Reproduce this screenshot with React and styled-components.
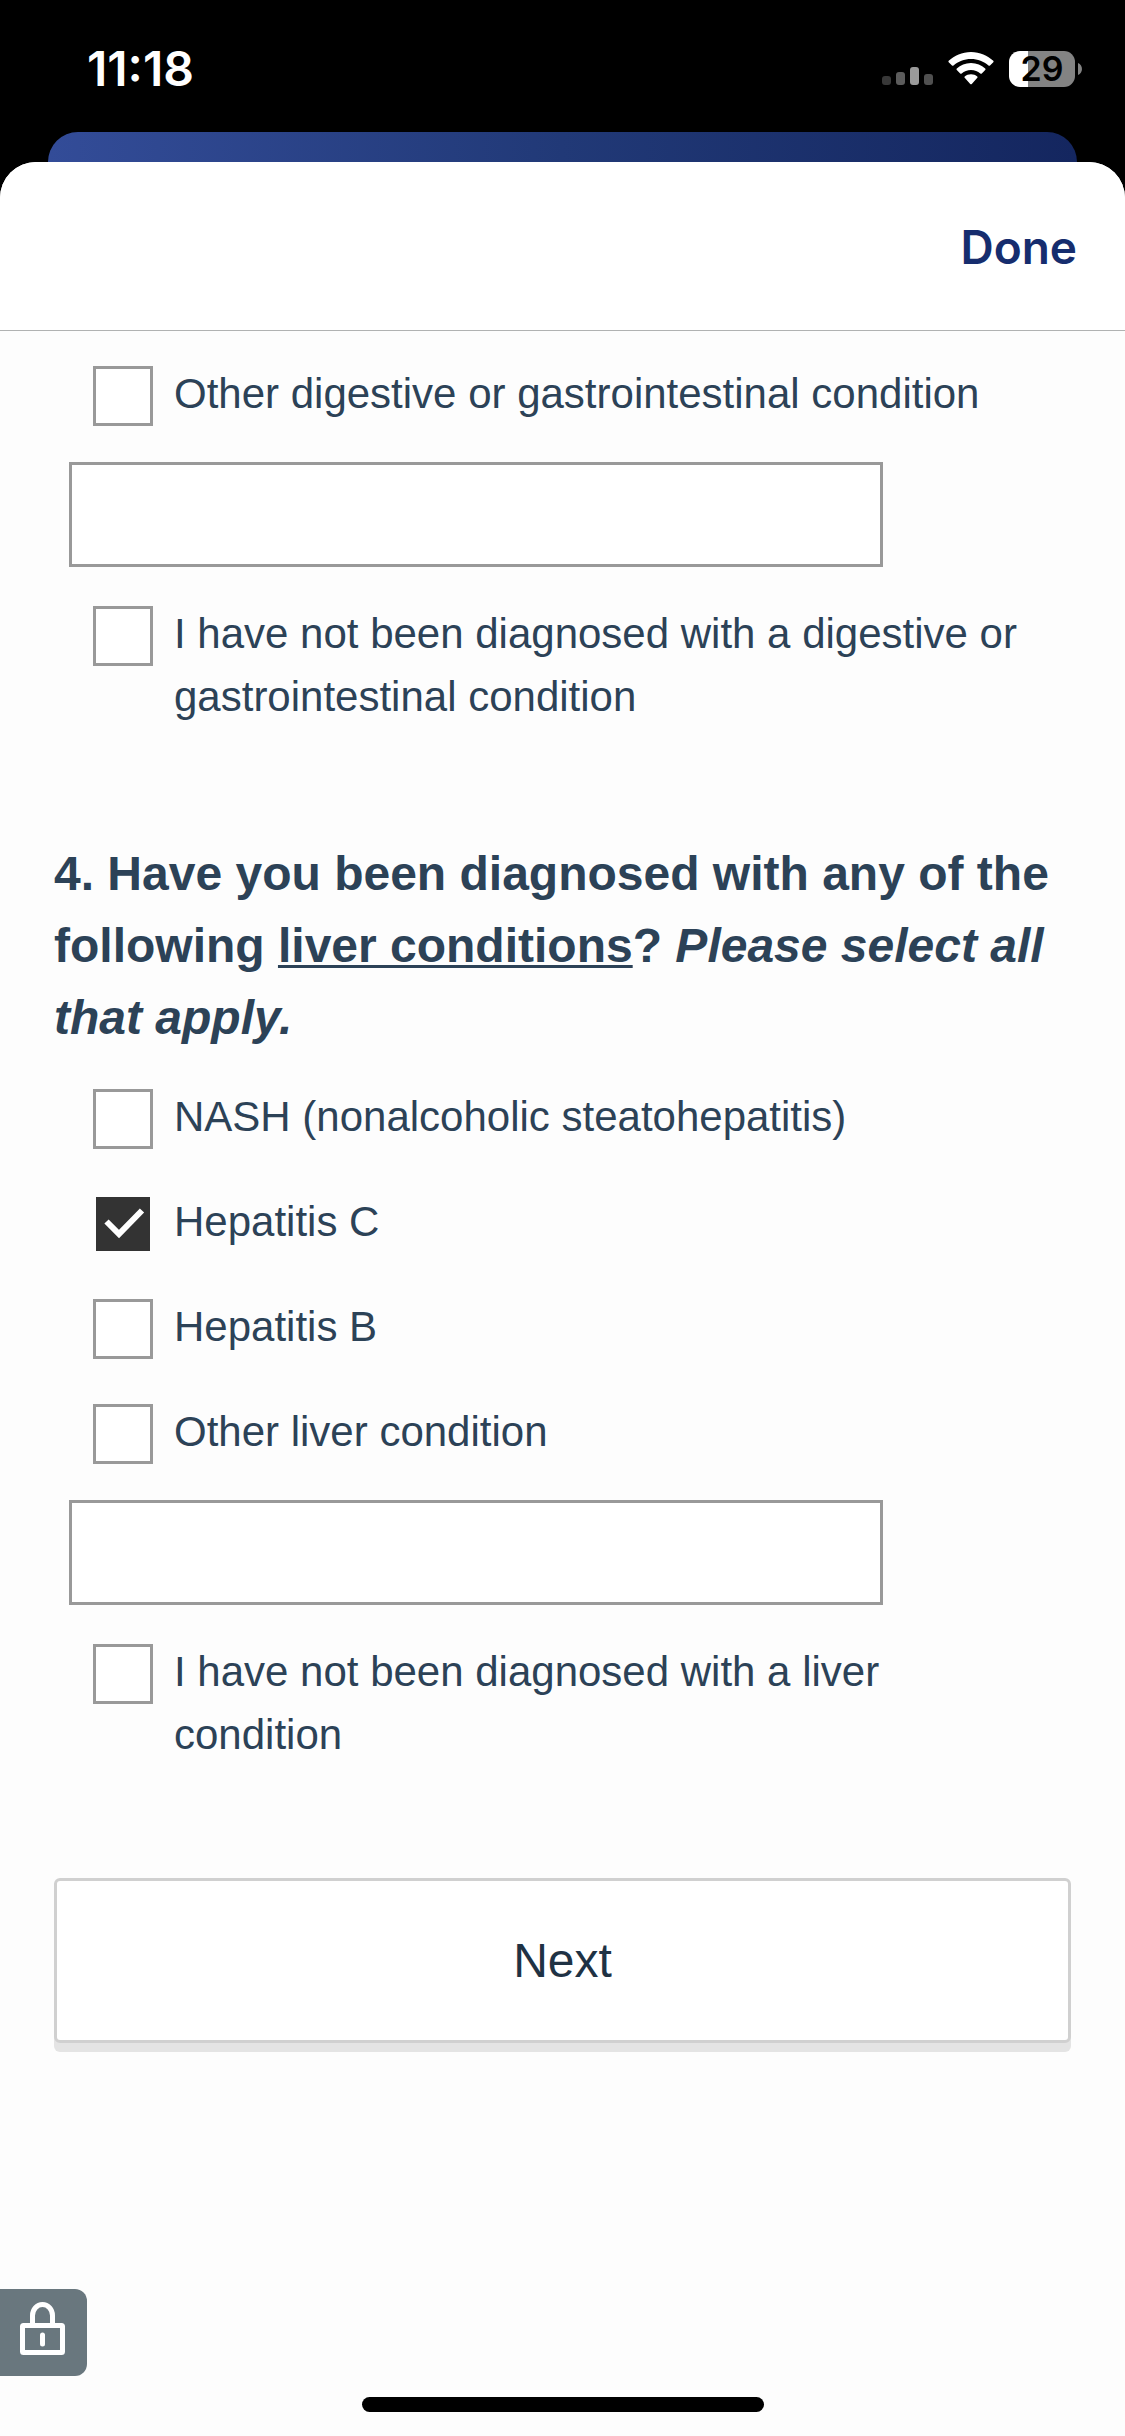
import React, { useState } from "react";
import styled, { createGlobalStyle } from "styled-components";

const digestiveOptions = [
	{ id: "digestive-other", label: "Other digestive or gastrointestinal condition", hasText: true },
	{ id: "digestive-none", label: "I have not been diagnosed with a digestive or gastrointestinal condition" },
];

const liverOptions = [
	{ id: "nash", label: "NASH (nonalcoholic steatohepatitis)" },
	{ id: "hepatitis-c", label: "Hepatitis C" },
	{ id: "hepatitis-b", label: "Hepatitis B" },
	{ id: "liver-other", label: "Other liver condition", hasText: true },
	{ id: "liver-none", label: "I have not been diagnosed with a liver condition" },
];

const StatusBar = () => {
	return (
		<StatusWrapper>
			<Time>11:18</Time>
			<StatusIcons>
				<svg width="51" height="36" viewBox="0 0 51 36">
					<rect x="0" y="25" width="9" height="9" rx="3" fill="#383838" />
					<rect x="14" y="21" width="9" height="13" rx="3" fill="#5c5c5c" />
					<rect x="28" y="16" width="9" height="18" rx="3" fill="#9a9a9a" />
					<rect x="42" y="23" width="9" height="11" rx="3" fill="#505050" />
				</svg>
				<svg width="46" height="36" viewBox="0 0 46 36" fill="#fff">
					<path d="M23 1C14 1 6.500 4.500 0.700 9.800Q0 10.500 0.700 11.200L4 14.500Q4.700 15.200 5.500 14.500C10.200 10.300 16.200 7.900 23 7.900S35.800 10.300 40.500 14.500Q41.300 15.200 42 14.500L45.300 11.200Q46 10.500 45.300 9.800C39.500 4.500 32 1 23 1Z" />
					<path d="M23 12C17.300 12 12.500 14.200 8.800 17.500Q8 18.300 8.800 19.100L12.200 22.400Q12.900 23.100 13.700 22.400C16.200 20.200 19.300 18.900 23 18.900S29.800 20.200 32.300 22.400Q33.100 23.100 33.800 22.400L37.200 19.100Q38 18.300 37.200 17.500C33.500 14.200 28.700 12 23 12Z" />
					<path d="M23 23.200C20.500 23.200 18.500 24 16.700 25.400Q16 26.100 16.700 26.800L22.200 32.900Q23 33.700 23.800 32.900L29.300 26.800Q30 26.100 29.300 25.400C27.500 24 25.500 23.200 23 23.200Z" />
				</svg>
				<Battery>
					<BatteryLevel>29</BatteryLevel>
					<svg width="4" height="12" viewBox="0 0 4 12">
						<path d="M0 0C5.300 2 5.300 10 0 12Z" fill="#838383" />
					</svg>
				</Battery>
			</StatusIcons>
		</StatusWrapper>
	);
};

const Option = ({ option, checked, onToggle }) => {
	return (
		<>
			<OptionRow>
				<Tick>
					<input type="checkbox" id={option.id} checked={checked} onChange={() => onToggle(option.id)} />
					{checked && (
						<svg width="60" height="60" viewBox="0 0 60 60">
							<path d="M13.500 27.500L26 40L49 16.500" fill="none" stroke="#fff" strokeWidth="6" />
						</svg>
					)}
				</Tick>
				<label id={`${option.id}-label`} htmlFor={option.id}>
					{option.label}
				</label>
			</OptionRow>
			{option.hasText && <OtherInput type="text" aria-labelledby={`${option.id}-label`} />}
		</>
	);
};

const App = () => {
	const [selected, setSelected] = useState(["hepatitis-c"]);

	const toggle = (id) => {
		setSelected(selected.includes(id) ? selected.filter((item) => item !== id) : [...selected, id]);
	};

	const renderOption = (option) => (
		<Option key={option.id} option={option} checked={selected.includes(option.id)} onToggle={toggle} />
	);

	return (
		<Screen>
			<GlobalStyle />
			<StatusBar />
			<BackCard />
			<Sheet>
				<SheetHeader>
					<DoneButton type="button">Done</DoneButton>
				</SheetHeader>
				<Form onSubmit={(e) => e.preventDefault()}>
					<Options>{digestiveOptions.map(renderOption)}</Options>
					<Question>
						4. Have you been diagnosed with any of the following <u>liver conditions</u>?{" "}
						<em>Please select all that apply.</em>
					</Question>
					<Options>{liverOptions.map(renderOption)}</Options>
					<NextButton type="submit">Next</NextButton>
				</Form>
				<Footer>
					<LockTab type="button" aria-label="Privacy">
						<svg width="45" height="53" viewBox="0 0 45 53" fill="none" stroke="#fff" strokeWidth="5">
							<path d="M12.500 22V13.500A10 11 0 0 1 32.500 13.500V22" />
							<rect x="2.500" y="23.500" width="40" height="27" rx="1" />
							<path d="M22.500 33V42" strokeLinecap="round" />
						</svg>
					</LockTab>
					<HomeIndicator />
				</Footer>
			</Sheet>
		</Screen>
	);
};

const GlobalStyle = createGlobalStyle`
	* {
		box-sizing: border-box;
	}
	body {
		margin: 0;
		background-color: #000;
		font-family: "Liberation Sans", Arial, sans-serif;
		color: #2c4257;
	}
	button, input {
		font-family: inherit;
		color: inherit;
	}
`;

const Screen = styled.div`
	min-height: 100vh;
	display: flex;
	flex-direction: column;
`;

const StatusWrapper = styled.div`
	height: 132px;
	padding: 0 43px 0 87px;
	display: flex;
	justify-content: space-between;
	color: #fff;
	font-family: Inter, sans-serif;
`;

const Time = styled.div`
	padding-top: 39px;
	font-size: 48px;
	line-height: 60px;
	font-weight: 600;
`;

const StatusIcons = styled.div`
	height: 36px;
	margin-top: 51px;
	display: flex;
	gap: 15px;
`;

const Battery = styled.div`
	display: flex;
	align-items: center;
	gap: 3px;
`;

const BatteryLevel = styled.div`
	width: 66px;
	height: 36px;
	border-radius: 11px;
	background: linear-gradient(to right, #fff 19px, #838383 19px);
	color: #000;
	font-size: 34px;
	line-height: 36px;
	font-weight: 600;
	text-align: center;
`;

const BackCard = styled.div`
	height: 60px;
	margin: 0 48px -30px;
	border-radius: 30px 30px 0 0;
	background: linear-gradient(to right, #334c98, #213977 50%, #14265f);
`;

const Sheet = styled.main`
	flex: 1;
	display: flex;
	flex-direction: column;
	border-radius: 36px 36px 0 0;
	background-color: #fdfdfd;
	overflow: hidden;
`;

const SheetHeader = styled.header`
	height: 169px;
	padding: 2px 48px 0;
	display: flex;
	align-items: center;
	justify-content: flex-end;
	background-color: #fff;
	border-bottom: 1px solid #b0b2b2;
`;

const DoneButton = styled.button`
	border: none;
	padding: 0;
	background: none;
	color: #162d6e;
	font-family: Inter, sans-serif;
	font-size: 46px;
	line-height: 60px;
	font-weight: 600;
`;

const Form = styled.form`
	padding: 31px 54px 0;
`;

const Options = styled.div`
	display: flex;
	flex-direction: column;
`;

const OptionRow = styled.div`
	margin: 0 39px;
	display: flex;
	align-items: flex-start;
	gap: 21px;
	font-size: 42px;
	line-height: 63px;
	& + & {
		margin-top: 42px;
	}
	label {
		flex: 1;
	}
`;

const Tick = styled.span`
	height: 60px;
	margin: 4px 0 -1px;
	display: grid;
	input {
		appearance: none;
		grid-area: 1 / 1;
		width: 60px;
		height: 60px;
		margin: 0;
		border: 3px solid #999;
		background: #fff padding-box;
	}
	input:checked {
		border-color: transparent;
		background-color: #333;
	}
	svg {
		grid-area: 1 / 1;
		pointer-events: none;
	}
`;

const OtherInput = styled.input`
	width: 80%;
	height: 105px;
	margin: 37px 15px 35px;
	padding: 0 24px;
	border: 3px solid #999;
	border-radius: 0;
	background-color: #fff;
	font-size: 42px;
`;

const Question = styled.h2`
	margin: 110px 0 31px;
	font-size: 48px;
	line-height: 72px;
	font-weight: 700;
	u {
		text-decoration-thickness: 3px;
		text-underline-offset: 3px;
		text-decoration-skip-ink: none;
	}
`;

const NextButton = styled.button`
	width: 100%;
	height: 165px;
	margin-top: 112px;
	border: 3px solid #d0d0d0;
	border-radius: 6px;
	background-color: #fff;
	box-shadow: 0 9px 0 #e4e4e4;
	color: #1f3244;
	font-size: 48px;
`;

const Footer = styled.footer`
	margin-top: auto;
	padding: 60px 0 24px;
	display: flex;
	flex-direction: column;
	gap: 21px;
`;

const LockTab = styled.button`
	width: 87px;
	height: 87px;
	padding: 0 2px 8px 0;
	display: flex;
	align-items: center;
	justify-content: center;
	border: none;
	border-radius: 0 12px 12px 0;
	background-color: #69777e;
`;

const HomeIndicator = styled.div`
	width: 402px;
	height: 15px;
	align-self: center;
	border-radius: 8px;
	background-color: #000;
`;

export default App;
